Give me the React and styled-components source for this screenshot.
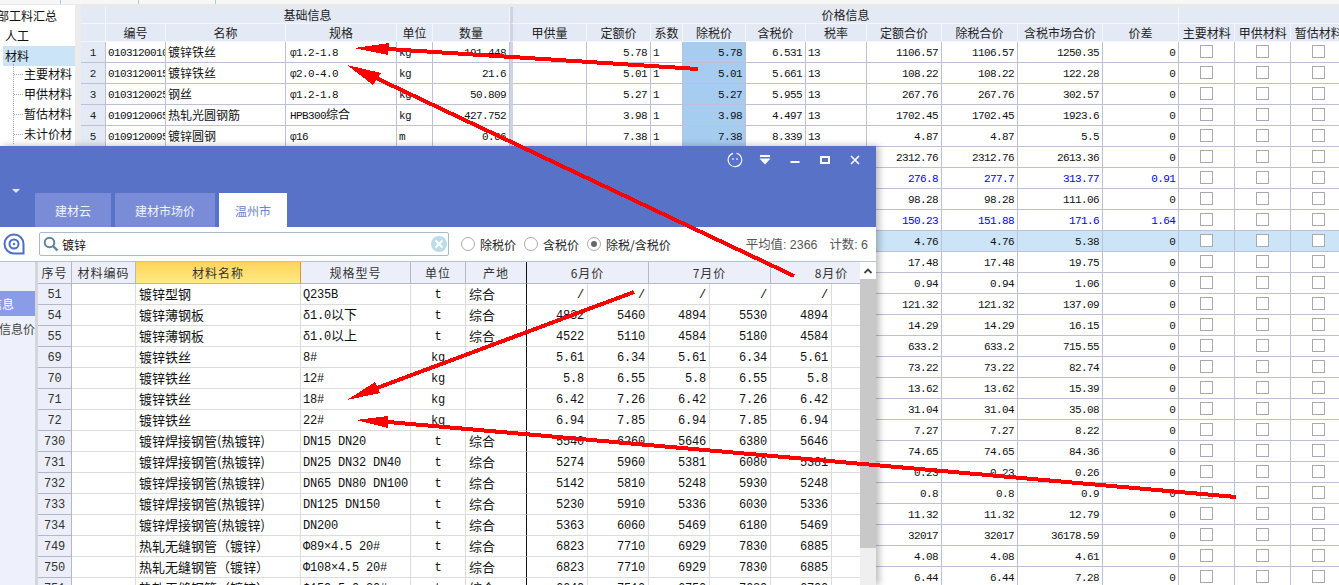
import styled, { createGlobalStyle } from 'styled-components'

const GlobalStyle = createGlobalStyle`
  html, body { margin: 0; padding: 0; background: #fff; }
  body { font-family: "Noto Sans CJK SC", sans-serif; }
`

const MONO = `"Liberation Mono", monospace`
const ZH = `"Noto Sans CJK SC", sans-serif`

const sheetCols = [25, 60, 120, 111, 36, 77, 77, 64, 32, 63, 60, 61, 75, 76, 85, 76, 56, 56, 56]
const sheetHeads = ['编号', '名称', '规格', '单位', '数量', '甲供量', '定额价', '系数', '除税价', '含税价', '税率', '定额合价', '除税合价', '含税市场合价', '价差', '主要材料', '甲供材料', '暂估材料']

const topRows = [
  { code: '0103120010', name: '镀锌铁丝', spec: 'φ1.2-1.8', unit: 'kg', qty: '191.448', base: '5.78', tax: '6.531' },
  { code: '0103120015', name: '镀锌铁丝', spec: 'φ2.0-4.0', unit: 'kg', qty: '21.6', base: '5.01', tax: '5.661' },
  { code: '0103120025', name: '钢丝', spec: 'φ1.2-1.8', unit: 'kg', qty: '50.809', base: '5.27', tax: '5.955' },
  { code: '0109120065', name: '热轧光圆钢筋', spec: 'HPB300', specZh: '综合', unit: 'kg', qty: '427.752', base: '3.98', tax: '4.497' },
  { code: '0109120095', name: '镀锌圆钢', spec: 'φ16', unit: 'm', qty: '0.66', base: '7.38', tax: '8.339' },
]

const totals = [
  ['1106.57', '1106.57', '1250.35', '0'], ['108.22', '108.22', '122.28', '0'], ['267.76', '267.76', '302.57', '0'],
  ['1702.45', '1702.45', '1923.6', '0'], ['4.87', '4.87', '5.5', '0'], ['2312.76', '2312.76', '2613.36', '0'],
  ['276.8', '277.7', '313.77', '0.91'], ['98.28', '98.28', '111.06', '0'], ['150.23', '151.88', '171.6', '1.64'],
  ['4.76', '4.76', '5.38', '0'], ['17.48', '17.48', '19.75', '0'], ['0.94', '0.94', '1.06', '0'],
  ['121.32', '121.32', '137.09', '0'], ['14.29', '14.29', '16.15', '0'], ['633.2', '633.2', '715.55', '0'],
  ['73.22', '73.22', '82.74', '0'], ['13.62', '13.62', '15.39', '0'], ['31.04', '31.04', '35.08', '0'],
  ['7.27', '7.27', '8.22', '0'], ['74.65', '74.65', '84.36', '0'], ['0.23', '0.23', '0.26', '0'],
  ['0.8', '0.8', '0.9', '0'], ['11.32', '11.32', '12.79', '0'], ['32017', '32017', '36178.59', '0'],
  ['4.08', '4.08', '4.61', '0'], ['6.44', '6.44', '7.28', '0'],
]

const priceCols = [34, 64, 165, 110, 55, 61, 61, 61, 61, 61, 61, 61]

const W = '镀锌铁丝'
const P = '镀锌焊接钢管(热镀锌)'
const S = '热轧无缝钢管（镀锌）'
const prices = [
  ['51', '镀锌型钢', 'Q235B', '', 't', '综合', ['/', '/', '/', '/', '/']],
  ['54', '镀锌薄钢板', 'δ1.0', '以下', 't', '综合', ['4832', '5460', '4894', '5530', '4894']],
  ['55', '镀锌薄钢板', 'δ1.0', '以上', 't', '综合', ['4522', '5110', '4584', '5180', '4584']],
  ['69', W, '8#', '', 'kg', '', ['5.61', '6.34', '5.61', '6.34', '5.61']],
  ['70', W, '12#', '', 'kg', '', ['5.8', '6.55', '5.8', '6.55', '5.8']],
  ['71', W, '18#', '', 'kg', '', ['6.42', '7.26', '6.42', '7.26', '6.42']],
  ['72', W, '22#', '', 'kg', '', ['6.94', '7.85', '6.94', '7.85', '6.94']],
  ['730', P, 'DN15 DN20', '', 't', '综合', ['5540', '6260', '5646', '6380', '5646']],
  ['731', P, 'DN25 DN32 DN40', '', 't', '综合', ['5274', '5960', '5381', '6080', '5381']],
  ['732', P, 'DN65 DN80 DN100', '', 't', '综合', ['5142', '5810', '5248', '5930', '5248']],
  ['733', P, 'DN125 DN150', '', 't', '综合', ['5230', '5910', '5336', '6030', '5336']],
  ['734', P, 'DN200', '', 't', '综合', ['5363', '6060', '5469', '6180', '5469']],
  ['749', S, 'Φ89×4.5 20#', '', 't', '综合', ['6823', '7710', '6929', '7830', '6885']],
  ['750', S, 'Φ108×4.5 20#', '', 't', '综合', ['6823', '7710', '6929', '7830', '6885']],
  ['751', S, 'Φ159×5.0 20#', '', 't', '综合', ['6640', '7510', '6750', '7630', '6700']],
]

function App() {
  return (
    <Page>
      <GlobalStyle />
      <TopStrip>
        <TopTab $w={61} />
        <TopTab $w={78} />
        <TopTab $w={77} />
      </TopStrip>
      <Workspace>
        <Tree>
          <TreeRoot>部工料汇总</TreeRoot>
          <TreeBranch>人工</TreeBranch>
          <TreeBranch $active>材料</TreeBranch>
          <TreeLeaves>
            <TreeLeaf>主要材料</TreeLeaf>
            <TreeLeaf>甲供材料</TreeLeaf>
            <TreeLeaf>暂估材料</TreeLeaf>
            <TreeLeaf>未计价材</TreeLeaf>
          </TreeLeaves>
        </Tree>
        <Gutter />
        <SheetWrap>
          <Sheet>
            <colgroup>
              {sheetCols.map((w, i) => <col key={i} width={w} />)}
            </colgroup>
            <thead>
              <tr>
                <SheetHead $h={17} />
                <SheetHead $h={17} colSpan={5}>基础信息</SheetHead>
                <SheetHead $h={17} $split colSpan={10}>价格信息</SheetHead>
                <SheetHead $h={17} colSpan={3} />
              </tr>
              <tr>
                <SheetHead $h={18} />
                {sheetHeads.map((h, i) => <SheetHead key={h} $h={18} $split={i === 5}>{h}</SheetHead>)}
              </tr>
            </thead>
            <tbody>
              {totals.map((t, i) => {
                const r = topRows[i]
                const blue = t[3] !== '0'
                return (
                  <SheetRow key={i} $selected={i === 9}>
                    <RowNo>{r ? i + 1 : ''}</RowNo>
                    <NumCell $left>{r && r.code}</NumCell>
                    <TextCell>{r && r.name}</TextCell>
                    <NumCell $left $pad={4}>{r && r.spec}{r && r.specZh && <Zh>{r.specZh}</Zh>}</NumCell>
                    <NumCell $left>{r && r.unit}</NumCell>
                    <NumCell>{r && r.qty}</NumCell>
                    <NumCell $split />
                    <NumCell>{r && r.base}</NumCell>
                    <NumCell $left>{r && '1'}</NumCell>
                    <NumCell $hl={!!r}>{r && r.base}</NumCell>
                    <NumCell>{r && r.tax}</NumCell>
                    <NumCell $left>{r && '13'}</NumCell>
                    {t.map((v, k) => <NumCell key={k} $blue={blue}>{v}</NumCell>)}
                    {[0, 1, 2].map(k => <BoxCell key={k}><Tick /></BoxCell>)}
                  </SheetRow>
                )
              })}
            </tbody>
          </Sheet>
        </SheetWrap>
      </Workspace>

      <Dialog>
        <TitleBar>
          <Chevron />
          <WinButtons>
            <WinButton>
              <svg width="16" height="16" viewBox="0 0 16 16" fill="none" stroke="#fff" strokeWidth="1.1">
                <path d="M6 1.4A6.8 6.8 0 1 0 9.5 1.3" />
                <path d="M6 6v2M10 6v2" />
              </svg>
            </WinButton>
            <WinButton>
              <svg width="12" height="10" viewBox="0 0 12 10" fill="#fff">
                <rect x="1" y="0" width="10" height="2" />
                <path d="M0.5 3.5h11L6 9.5z" />
              </svg>
            </WinButton>
            <WinButton>
              <svg width="10" height="10" viewBox="0 0 10 10" fill="#fff"><rect x="0.5" y="6" width="9" height="2" /></svg>
            </WinButton>
            <WinButton>
              <svg width="10" height="10" viewBox="0 0 10 10" fill="none" stroke="#fff" strokeWidth="2"><rect x="1" y="2" width="8" height="6" /></svg>
            </WinButton>
            <WinButton>
              <svg width="10" height="10" viewBox="0 0 10 10" fill="none" stroke="#fff" strokeWidth="1.6"><path d="M1 1l8 8M9 1l-8 8" /></svg>
            </WinButton>
          </WinButtons>
        </TitleBar>
        <TabBar>
          <Tab $w={76}>建材云</Tab>
          <Tab $w={100}>建材市场价</Tab>
          <Tab $w={68} $active>温州市</Tab>
        </TabBar>
        <Toolbar>
          <LogoSlot>
            <svg width="24" height="24" viewBox="0 0 24 24" fill="none" stroke="#4f6fc4">
              <path d="M21.5 21.5H12A9.5 9.5 0 1 1 21.5 12z" strokeWidth="2" />
              <circle cx="12" cy="12" r="4.5" strokeWidth="2" />
              <circle cx="12" cy="12" r="1.2" fill="#4f6fc4" stroke="none" />
            </svg>
          </LogoSlot>
          <SearchBox>
            <svg width="16" height="16" viewBox="0 0 16 16" fill="none" stroke="#5c8796" strokeWidth="2">
              <circle cx="6.5" cy="6.5" r="4.8" />
              <path d="M10 10l4.5 4.5" strokeWidth="2.4" />
            </svg>
            <SearchText>镀锌</SearchText>
            <svg width="16" height="16" viewBox="0 0 16 16">
              <circle cx="8" cy="8" r="8" fill="#bcdcea" />
              <path d="M4.5 4.5l7 7M11.5 4.5l-7 7" stroke="#fff" strokeWidth="1.8" />
            </svg>
          </SearchBox>
          <RadioGroup>
            <RadioItem><RadioMark />除税价</RadioItem>
            <RadioItem><RadioMark />含税价</RadioItem>
            <RadioItem><RadioMark $on />除税/含税价</RadioItem>
          </RadioGroup>
          <Stats>
            <span>平均值: 2366</span>
            <span>计数: 6</span>
          </Stats>
        </Toolbar>
        <DialogBody>
          <SideNav>
            <SideItem $active>信息</SideItem>
            <SideItem>地区信息价</SideItem>
          </SideNav>
          <SideGap />
          <PriceWrap>
            <PriceTable>
              <colgroup>
                {priceCols.map((w, i) => <col key={i} width={w} />)}
              </colgroup>
              <thead>
                <tr>
                  <PriceHead>序号</PriceHead>
                  <PriceHead>材料编码</PriceHead>
                  <PriceHead $gold>材料名称</PriceHead>
                  <PriceHead>规格型号</PriceHead>
                  <PriceHead>单位</PriceHead>
                  <PriceHead $freeze>产地</PriceHead>
                  <PriceHead colSpan={2}>6月价</PriceHead>
                  <PriceHead colSpan={2}>7月价</PriceHead>
                  <PriceHead colSpan={2}>8月价</PriceHead>
                </tr>
              </thead>
              <tbody>
                {prices.map(p => (
                  <tr key={p[0]}>
                    <PriceNo>{p[0]}</PriceNo>
                    <PriceCell />
                    <PriceCell $zh>{p[1]}</PriceCell>
                    <PriceCell>{p[2]}{p[3] && <PriceZh>{p[3]}</PriceZh>}</PriceCell>
                    <PriceCell $center>{p[4]}</PriceCell>
                    <PriceCell $zh $freeze>{p[5]}</PriceCell>
                    {p[6].map((v, k) => <PriceCell key={k} $right>{v}</PriceCell>)}
                    <PriceCell />
                  </tr>
                ))}
              </tbody>
            </PriceTable>
          </PriceWrap>
          <Scrollbar>
            <ScrollUp>
              <svg width="10" height="8" viewBox="0 0 10 8" fill="none" stroke="#444" strokeWidth="1.8"><path d="M1.5 6L5 2.5 8.5 6" /></svg>
            </ScrollUp>
            <ScrollThumb />
          </Scrollbar>
        </DialogBody>
      </Dialog>

      <Arrows width="1339" height="585" viewBox="0 0 1339 585">
        <g fill="none" stroke="#f00" strokeWidth="4" shapeRendering="crispEdges">
          <path d="M388 49L698 69" />
          <path d="M794 276L376 78" />
          <path d="M634 292L377 388" />
          <path d="M1236 497L388 422" />
        </g>
        <g fill="#f00" shapeRendering="crispEdges">
          <polygon points="354,48 389,43 388,55" />
          <polygon points="347,65 381,73 373,85" />
          <polygon points="347,400 375,382 380,393" />
          <polygon points="356,420 388,416 388,428" />
        </g>
      </Arrows>
    </Page>
  )
}

const Page = styled.div`
  position: relative;
  width: 1339px;
  height: 585px;
  overflow: hidden;
  background: #e9e9e9;
`

const TopStrip = styled.div`
  display: flex;
  height: 4px;
  background: #f7f7f7;
`

const TopTab = styled.div`
  width: ${p => p.$w}px;
  box-sizing: border-box;
  border-right: 1px solid #a9c8e6;
`

const Workspace = styled.div`
  display: flex;
  margin-top: 1px;
  height: 580px;
`

const Tree = styled.div`
  width: 75px;
  flex: none;
  padding-top: 1px;
  background: #fff;
  overflow: hidden;
  font-family: ${ZH};
  font-size: 12px;
  color: #111;
`

const TreeRoot = styled.div`
  height: 20px;
  line-height: 20px;
  margin-left: -3px;
  white-space: nowrap;
`

const TreeBranch = styled.div`
  height: 20px;
  line-height: 20px;
  margin-left: 3px;
  padding-left: 2px;
  background: ${p => (p.$active ? '#cce4f7' : 'transparent')};
`

const TreeLeaves = styled.div`
  margin: -2px 0 0 13px;
  border-left: 1px dotted #aaa;
`

const TreeLeaf = styled.div`
  height: 20px;
  line-height: 20px;
  padding-left: 10px;
  white-space: nowrap;
  background: repeating-linear-gradient(90deg, #aaa 0 1px, transparent 1px 2px) 0 10px / 10px 1px no-repeat;
`

const Gutter = styled.div`
  width: 6px;
  flex: none;
  background: #ececec;
`

const SheetWrap = styled.div`
  flex: 1;
  margin-top: 2px;
  overflow: hidden;
`

const Sheet = styled.table`
  table-layout: fixed;
  width: 1266px;
  border-collapse: separate;
  border-spacing: 0;
  background: #fff;
`

const SheetHead = styled.th`
  height: ${p => p.$h}px;
  padding: 0;
  box-sizing: border-box;
  background: #e4eaf5;
  border-right: 1px solid #f4f6fb;
  border-bottom: 1px solid #f4f6fb;
  border-left: ${p => (p.$split ? '3px solid #cfd3e4' : 'none')};
  font-family: ${ZH};
  font-weight: 400;
  font-size: 12px;
  line-height: 14px;
  color: #222;
  white-space: nowrap;
  overflow: hidden;
  text-align: center;
`

const SheetRow = styled.tr`
  background: ${p => (p.$selected ? '#cbe4f7' : '#fff')};
`

const RowNo = styled.td`
  height: 21px;
  padding: 1px 0 0;
  box-sizing: border-box;
  background: #e4eaf5;
  border-right: 1px solid #bfbfd8;
  border-bottom: 1px solid #bfbfd8;
  text-align: center;
  font-family: ${MONO};
  font-size: 11px;
  line-height: 18px;
  color: #222;
`

const NumCell = styled.td`
  height: 21px;
  padding: 1px ${p => (p.$left ? 0 : 3)}px 0 ${p => (p.$left ? p.$pad || 2 : 0)}px;
  box-sizing: border-box;
  border-right: 1px solid #bfbfd8;
  border-bottom: 1px solid #bfbfd8;
  border-left: ${p => (p.$split ? '3px solid #cfd3e4' : 'none')};
  background: ${p => (p.$hl ? '#a6ccf0' : 'transparent')};
  color: ${p => (p.$blue ? '#0000ff' : '#111')};
  text-align: ${p => (p.$left ? 'left' : 'right')};
  font-family: ${MONO};
  font-size: 11px;
  line-height: 18px;
  letter-spacing: -0.6px;
  white-space: nowrap;
  overflow: hidden;
`

const TextCell = styled.td`
  height: 21px;
  padding: 0 0 0 2px;
  box-sizing: border-box;
  border-right: 1px solid #bfbfd8;
  border-bottom: 1px solid #bfbfd8;
  font-family: ${ZH};
  font-size: 12px;
  line-height: 18px;
  color: #111;
  white-space: nowrap;
  overflow: hidden;
`

const Zh = styled.span`
  font-family: ${ZH};
  font-size: 12px;
  line-height: 14px;
  letter-spacing: 0;
`

const BoxCell = styled.td`
  height: 21px;
  padding: 0;
  box-sizing: border-box;
  border-right: 1px solid #bfbfd8;
  border-bottom: 1px solid #bfbfd8;
`

const Tick = styled.div`
  width: 13px;
  height: 13px;
  box-sizing: border-box;
  margin: 0 auto 2px;
  background: #fff;
  border: 1px solid #aaa;
`

const Dialog = styled.div`
  position: absolute;
  left: 0;
  top: 146px;
  width: 876px;
  height: 439px;
  display: flex;
  flex-direction: column;
  background: #fff;
  box-shadow: 3px 0 7px rgba(0, 0, 0, 0.28);
`

const TitleBar = styled.div`
  height: 47px;
  flex: none;
  display: flex;
  justify-content: space-between;
  background: #5872c8;
`

const Chevron = styled.div`
  align-self: flex-end;
  margin-left: 12px;
  width: 0;
  height: 0;
  border-left: 4px solid transparent;
  border-right: 4px solid transparent;
  border-top: 4px solid #e4e8f6;
`

const WinButtons = styled.div`
  display: flex;
  padding-right: 6px;
`

const WinButton = styled.div`
  width: 30px;
  height: 28px;
  display: flex;
  align-items: center;
  justify-content: center;
`

const TabBar = styled.div`
  height: 34px;
  flex: none;
  display: flex;
  gap: 4px;
  padding-left: 35px;
  background: #5872c8;
`

const Tab = styled.div`
  width: ${p => p.$w}px;
  display: flex;
  align-items: center;
  justify-content: center;
  background: ${p => (p.$active ? '#fff' : '#7a8cd8')};
  color: ${p => (p.$active ? '#6a82d4' : '#f0f2fb')};
  font-family: ${ZH};
  font-size: 12px;
`

const Toolbar = styled.div`
  height: 35px;
  flex: none;
  display: flex;
  align-items: center;
  box-sizing: border-box;
  border-bottom: 1px solid #b4c4d4;
  font-family: ${ZH};
  font-size: 12px;
`

const LogoSlot = styled.div`
  width: 39px;
  flex: none;
  display: flex;
  padding-left: 2px;
  box-sizing: border-box;
`

const SearchBox = styled.div`
  width: 410px;
  height: 24px;
  flex: none;
  box-sizing: border-box;
  display: flex;
  align-items: center;
  padding: 0 1px 0 3px;
  border: 1px solid #a8bcc8;
  border-radius: 2px;
`

const SearchText = styled.div`
  flex: 1;
  margin-left: 3px;
  font-size: 12px;
  color: #111;
`

const RadioGroup = styled.div`
  display: flex;
  gap: 8px;
  margin-left: 12px;
`

const RadioItem = styled.div`
  display: flex;
  align-items: center;
  gap: 5px;
  color: #222;
`

const RadioMark = styled.span`
  width: 14px;
  height: 14px;
  box-sizing: border-box;
  display: flex;
  align-items: center;
  justify-content: center;
  border: 1px solid #aaa;
  border-radius: 50%;
  background: #fff;
  &::after {
    content: '';
    width: 6px;
    height: 6px;
    border-radius: 50%;
    background: ${p => (p.$on ? '#666' : 'transparent')};
  }
`

const Stats = styled.div`
  margin-left: auto;
  padding-right: 8px;
  display: flex;
  gap: 12px;
  font-family: "Liberation Sans", ${ZH};
  font-size: 12.4px;
  color: #555;
`

const DialogBody = styled.div`
  flex: 1;
  display: flex;
  min-height: 0;
`

const SideNav = styled.div`
  width: 35px;
  flex: none;
  padding-top: 29px;
  overflow: hidden;
  background: #eef1fb;
  font-family: ${ZH};
  font-size: 12px;
  color: #444;
`

const SideItem = styled.div`
  height: 25px;
  line-height: 25px;
  display: flex;
  justify-content: flex-end;
  padding-right: ${p => (p.$active ? 21 : 0)}px;
  white-space: nowrap;
  background: ${p => (p.$active ? '#8a9ce8' : 'transparent')};
  color: ${p => (p.$active ? '#fff' : '#444')};
`

const SideGap = styled.div`
  width: 3px;
  flex: none;
  background: #d4d6dc;
`

const PriceWrap = styled.div`
  width: 822px;
  flex: none;
  overflow: hidden;
`

const PriceTable = styled.table`
  table-layout: fixed;
  width: 855px;
  border-collapse: separate;
  border-spacing: 0;
`

const PriceHead = styled.th`
  height: 22px;
  padding: 0;
  box-sizing: border-box;
  background: ${p => (p.$gold ? 'linear-gradient(#ffd45a, #ffe985)' : '#eceff9')};
  border-right: 1px solid ${p => (p.$freeze ? '#111' : p.$gold ? '#d89830' : '#b4b8c4')};
  border-bottom: 1px solid #b4b8c4;
  font-family: ${ZH};
  font-weight: 400;
  font-size: 12px;
  line-height: 18px;
  letter-spacing: 1px;
  color: #333;
  white-space: nowrap;
`

const PriceNo = styled.td`
  height: 21px;
  padding: 1px 0 0;
  box-sizing: border-box;
  background: #eceff9;
  border-right: 1px solid #b4b8c4;
  border-bottom: 1px solid #b4b8c4;
  text-align: center;
  font-family: ${MONO};
  font-size: 12px;
  line-height: 18px;
  letter-spacing: -0.2px;
  color: #333;
`

const PriceCell = styled.td`
  height: 21px;
  padding: ${p => (p.$right ? '1px 3px 0 0' : p.$zh ? '0 0 0 3px' : p.$center ? '1px 0 0' : '1px 0 0 2px')};
  box-sizing: border-box;
  border-right: 1px solid ${p => (p.$freeze ? '#111' : '#dcdcdc')};
  border-bottom: 1px solid #dcdcdc;
  text-align: ${p => (p.$right ? 'right' : p.$center ? 'center' : 'left')};
  font-family: ${p => (p.$zh ? ZH : MONO)};
  font-size: ${p => (p.$zh ? 13 : 12)}px;
  line-height: 18px;
  letter-spacing: ${p => (p.$zh ? 0 : -0.2)}px;
  color: #111;
  white-space: nowrap;
  overflow: hidden;
`

const PriceZh = styled.span`
  font-family: ${ZH};
  font-size: 13px;
  line-height: 14px;
  letter-spacing: 0;
`

const Scrollbar = styled.div`
  flex: 1;
  background: #efefef;
`

const ScrollUp = styled.div`
  height: 17px;
  display: flex;
  align-items: center;
  justify-content: center;
  background: #fff;
`

const ScrollThumb = styled.div`
  height: 269px;
  background: #c8c8c8;
`

const Arrows = styled.svg`
  position: absolute;
  left: 0;
  top: 0;
  pointer-events: none;
`

export default App
